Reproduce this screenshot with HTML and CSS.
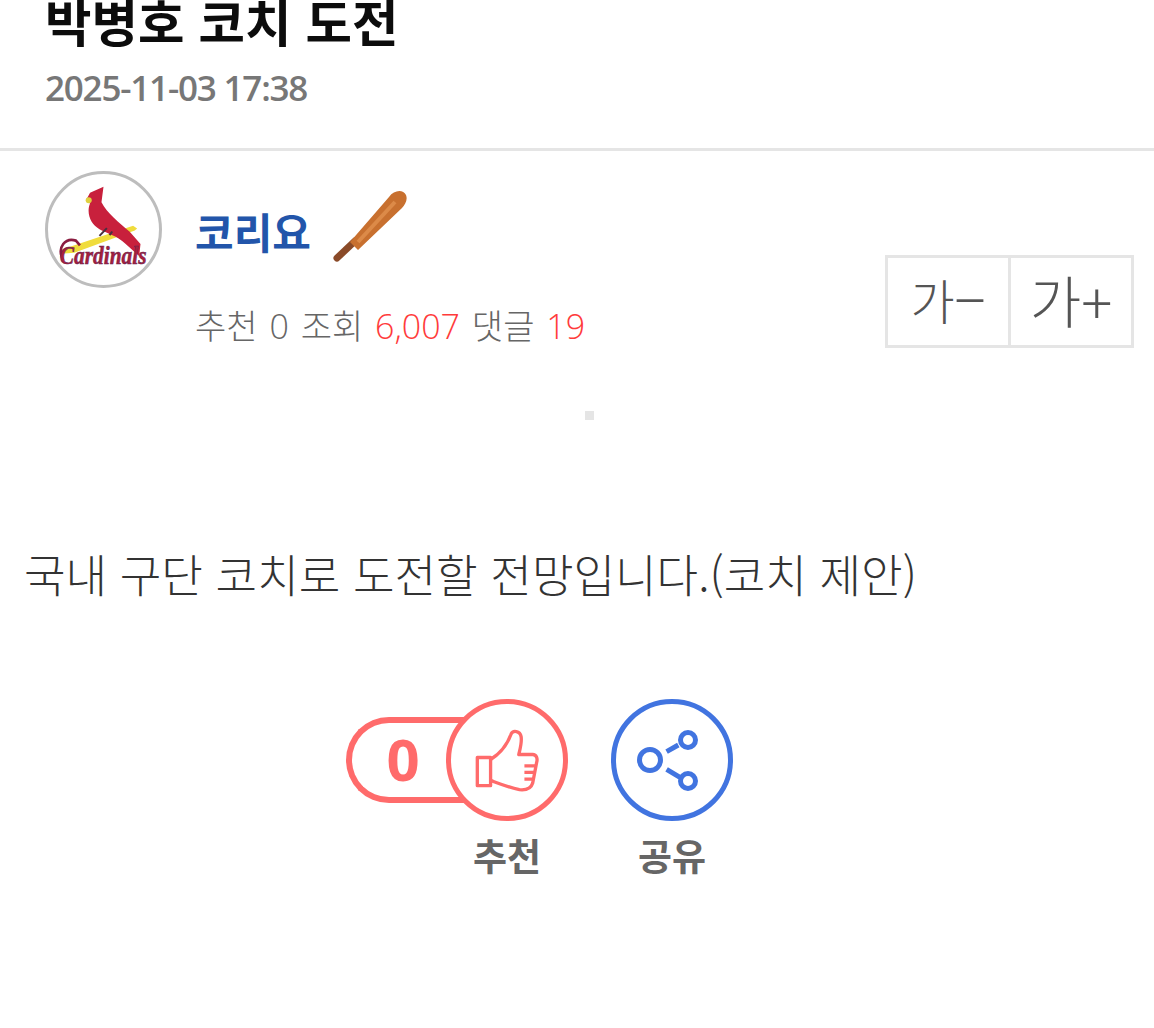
FILE: index.html
```html
<!DOCTYPE html>
<html lang="ko">
<head>
  <meta charset="UTF-8">
  <meta name="viewport" content="width=device-width,initial-scale=1">
  <title>박병호 코치 도전</title>
  <link rel="stylesheet" href="styles.css">
</head>
<body>
  <header class="post-head">
    <h1 class="post-title">박병호 코치 도전</h1>
    <div class="post-date">2025-11-03 17:38</div>
  </header>

  <section class="writer">
    <!-- team logo, drawn by hand -->
    <div class="avatar">
      <svg viewBox="87 44 330 330" width="111" height="111">
        <path d="M130 268 L340 198 L352 206 L345 212 L165 278 L135 280 Z" fill="#f0dc3c"/>
        <path d="M212 100 L252 82 L246 128 C262 160 300 190 330 216 L362 252 L358 288 L318 252 C290 226 262 220 240 208 C214 194 200 160 212 132 L200 122 Z" fill="#c8203c"/>
        <circle cx="208" cy="122" r="9" fill="#e0d040"/>
        <path d="M262 205 L240 228 M278 215 L270 226" stroke="#4a3040" stroke-width="6" fill="none"/>
        <path d="M132 300 C112 260 140 232 170 242 L182 256" stroke="#8a1c40" stroke-width="8" fill="none"/>
        <text class="avatar-script" x="122" y="312" textLength="258" lengthAdjust="spacingAndGlyphs">Cardinals</text>
      </svg>
    </div>
    <div class="writer-info">
      <div class="writer-name">
        <span>코리요</span>
        <svg class="bat" viewBox="0 0 74 74" width="74" height="74">
          <path d="M4 69 L22 52" stroke="#8a4a28" stroke-width="7" stroke-linecap="round"/>
          <path d="M17 53 L56 8 C61 1 70 0 73 6 C75 11 72 16 69 19 L25 61 Z" fill="#c8702f"/>
          <path d="M25 53 L62 13" stroke="#dc8a48" stroke-width="4"/>
        </svg>
      </div>
      <div class="writer-meta">
        <span>추천</span> <span>0</span> <span>조회</span> <span class="num">6,007</span> <span>댓글</span> <span class="num">19</span>
      </div>
    </div>
    <div class="font-btns">
      <button type="button" class="font-btn small">가<i>−</i></button>
      <button type="button" class="font-btn">가<i>+</i></button>
    </div>
  </section>

  <div class="dot"></div>

  <p class="post-body">국내 구단 코치로 도전할 전망입니다.(코치 제안)</p>

  <section class="actions">
    <div class="action">
      <div class="vote">
        <div class="vote-count">0</div>
        <div class="circle red">
          <svg viewBox="430 110 205 200" width="68" height="67" fill="none" stroke="#ff6b6b" stroke-width="10" stroke-linejoin="round">
            <path d="M443 201 H483 V286 H443 Z"/>
            <path d="M483 207 C510 190 532 165 545 130 C550 118 572 120 575 138 C578 155 572 175 568 192 H610 C622 192 625 205 622 215 L610 278 C605 295 590 300 570 298 C540 292 510 280 483 270"/>
            <path d="M585 226 H618 M585 246 H614 M585 266 H610"/>
          </svg>
        </div>
      </div>
      <div class="action-label">추천</div>
    </div>
    <div class="action">
      <div class="circle blue">
        <svg viewBox="0 0 70 70" width="70" height="70" fill="none" stroke="#4174e0" stroke-width="5">
          <circle cx="13" cy="35" r="10.5"/>
          <circle cx="51" cy="15" r="7.5"/>
          <circle cx="51" cy="56" r="7.5"/>
          <path d="M29.6 26.6 L41.3 20 M29.6 44.3 L43 52.3"/>
        </svg>
      </div>
      <div class="action-label">공유</div>
    </div>
  </section>
</body>
</html>
```

FILE: styles.css
```css
body {
  margin: 0;
  background: #fff;
  color: #333;
  font-family: "Noto Sans CJK KR", "Noto Sans", sans-serif;
}
.post-head {
  height: 148px;
  padding-left: 45px;
  border-bottom: 3px solid #e5e5e5;
  overflow: hidden;
}
.post-title {
  margin: -15px 0 0;
  font-size: 50.5px;
  line-height: 70px;
  font-weight: 700;
  color: #0c0c0c;
}
.post-date {
  margin-top: 9px;
  font-family: "Open Sans", sans-serif;
  font-size: 35px;
  line-height: 48px;
  font-weight: 600;
  letter-spacing: -1.2px;
  color: #777;
}
.writer {
  display: flex;
  padding: 20px 20px 0 45px;
  height: 210px;
  box-sizing: border-box;
}
.avatar {
  width: 117px;
  height: 117px;
  border: 3px solid #bdbdbd;
  border-radius: 50%;
  box-sizing: border-box;
  overflow: hidden;
  flex: none;
}
.avatar-script {
  font-family: "Liberation Serif", serif;
  font-style: italic;
  font-weight: 700;
  font-size: 74px;
  fill: #a8203c;
  stroke: #5a2050;
  stroke-width: 1.5px;
}
.writer-info {
  margin: 17px 0 0 33px;
  flex: 1;
}
.writer-name {
  display: flex;
  align-items: center;
  gap: 22px;
  height: 84px;
  font-size: 42px;
  font-weight: 700;
  color: #2255aa;
}
.bat {
  margin-bottom: 8px;
}
.writer-meta {
  margin-top: 31px;
  font-family: "Open Sans", "Noto Sans CJK KR", sans-serif;
  font-size: 34px;
  line-height: 46px;
  font-weight: 300;
  word-spacing: 3px;
  color: #666;
}
.writer-meta .num {
  color: #ff3b3b;
}
.font-btns {
  display: flex;
  align-self: flex-start;
  margin-top: 84px;
  width: 249px;
  height: 93px;
  border: 3px solid #e5e5e5;
  box-sizing: border-box;
  flex: none;
}
.font-btn {
  flex: 1;
  padding: 0 0 6px;
  background: #fff;
  border: none;
  font-family: inherit;
  font-size: 56px;
  line-height: 1;
  font-weight: 300;
  color: #555;
}
.font-btn:first-child {
  border-right: 3px solid #e5e5e5;
}
.font-btn.small {
  font-size: 48px;
}
.font-btn i {
  font-style: normal;
  margin-left: 0;
  font-size: 58px;
  line-height: 40px;
  vertical-align: -2px;
}
.dot {
  width: 9px;
  height: 9px;
  margin: 50px 0 0 585px;
  background: #e5e5e5;
}
.post-body {
  margin: 122px 0 0;
  padding-left: 24px;
  font-size: 45.2px;
  line-height: 64px;
  font-weight: 300;
  color: #333;
}
.actions {
  display: flex;
  justify-content: center;
  align-items: flex-start;
  gap: 43px;
  margin-top: 93px;
  padding-right: 75px;
}
.action {
  display: flex;
  flex-direction: column;
  align-items: flex-end;
}
.vote {
  display: flex;
  align-items: center;
}
.vote-count {
  width: 118px;
  height: 86px;
  margin-right: -18px;
  padding-right: 10px;
  border: 6px solid #ff6b6b;
  border-radius: 43px 0 0 43px;
  border-right: none;
  box-sizing: border-box;
  text-align: center;
  font-family: "Open Sans", sans-serif;
  font-size: 58px;
  line-height: 72px;
  font-weight: 700;
  color: #ff6b6b;
}
.circle {
  display: flex;
  align-items: center;
  justify-content: center;
  position: relative;
  width: 122px;
  height: 122px;
  border-radius: 50%;
  border: 5px solid;
  background: #fff;
  box-sizing: border-box;
}
.circle.red {
  border-color: #ff6b6b;
}
.circle.blue {
  border-color: #4174e0;
}
.action-label {
  width: 122px;
  margin-top: 9px;
  text-align: center;
  font-size: 37px;
  line-height: 50px;
  font-weight: 700;
  color: #666;
}
```
